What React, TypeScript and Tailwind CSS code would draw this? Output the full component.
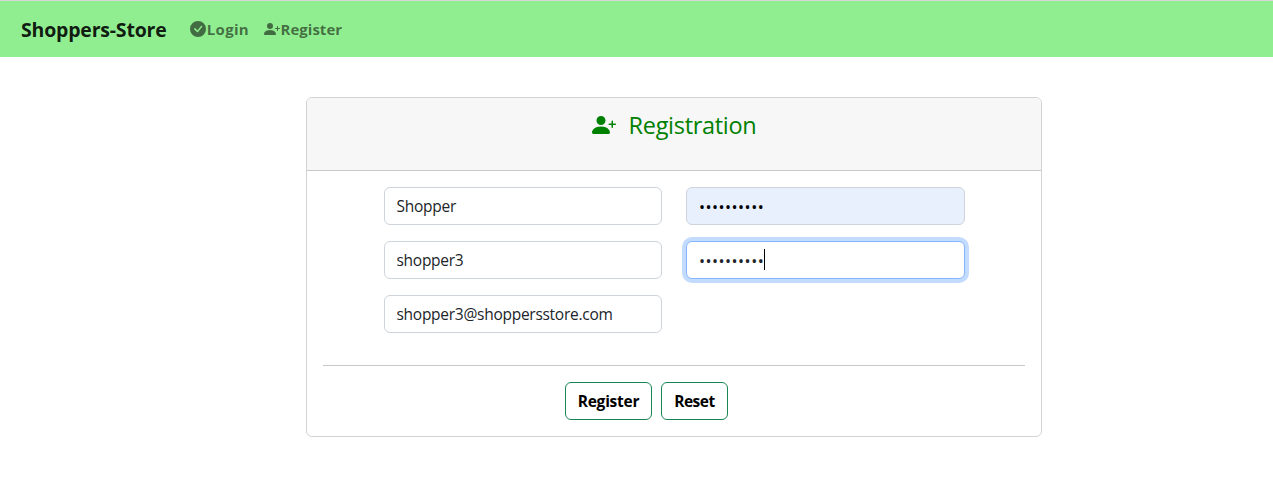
import React from "react";
import { BsCheckCircleFill, BsPersonPlusFill } from "react-icons/bs";

const field =
  "h-[38px] w-full rounded-md border border-[#ced4da] bg-white px-[11.5px] text-[15.5px] text-[#212529] outline-none tracking-[-0.27px]";

function TextField({ value }: { value: string }) {
  return <input type="text" defaultValue={value} className={field} />;
}

function MaskedField({ focused = false }: { focused?: boolean }) {
  const look = focused
    ? "border-[#86b7fe] bg-white text-[#212529] ring-4 ring-[#c2dbfe]"
    : "border-[#ced4da] bg-[#e8f0fe] text-black";
  return (
    <div className={`flex h-[38px] w-full items-center rounded-md border px-3 text-base ${look}`}>
      <span className="pt-px tracking-[0.5px]">••••••••••</span>
      {focused && <span className="-mt-px h-[21px] w-px bg-black" />}
    </div>
  );
}

export default function App() {
  return (
    <div className="min-h-[494px] bg-white font-['Open_Sans','Noto_Sans',sans-serif] text-[#212529]">
      <nav className="flex h-[57px] items-center border-t border-[#d5d7d9] bg-[#90ee90] pl-[21px]">
        <a className="w-[169.3px] whitespace-nowrap pt-[2px] text-[19.5px] font-bold tracking-[-0.2px] text-black/90">Shoppers-Store</a>
        <a className="flex w-[74px] items-center whitespace-nowrap text-base font-bold text-black/55">
          <BsCheckCircleFill className="size-4 shrink-0" />
          <span className="pl-[0.5px] text-[15px] tracking-[0.3px]">Login</span>
        </a>
        <a className="flex items-center whitespace-nowrap text-base font-bold text-black/55">
          <BsPersonPlusFill className="size-4 shrink-0" />
          <span className="pl-[0.3px] text-[15px]">Register</span>
        </a>
      </nav>

      <main className="ml-[306px] mt-10 h-[340px] w-[736px] rounded-md border border-[#d2d2d2]">
        <header className="flex h-[73px] justify-center rounded-t-[5px] border-b border-[#c8c8c8] bg-[#f7f7f7] pt-[9px] text-[#008000]">
          <h4 className="flex h-9 items-center gap-[13px] text-[23.5px] font-[370] tracking-[-0.3px]">
            <BsPersonPlusFill className="size-6" />
            <span className="pt-[2px]">Registration</span>
          </h4>
        </header>

        <form className="px-4 pt-4">
          <div className="ml-[61px] grid w-[581px] grid-cols-[278px_279px] gap-x-6 gap-y-4">
            <TextField value="Shopper" />
            <MaskedField />
            <TextField value="shopper3" />
            <MaskedField focused />
            <TextField value="shopper3@shoppersstore.com" />
          </div>
          <hr className="mt-8 border-t border-[#c8c8c8]" />
          <div className="ml-[242px] mt-4 flex gap-[9px]">
            <button type="button" className="h-[38px] w-[87px] rounded-md border border-[#198754] pt-px text-[15.5px] font-bold tracking-[-0.25px] text-black">
              <span>Register</span>
            </button>
            <button type="button" className="h-[38px] w-[67px] rounded-md border border-[#198754] pt-px text-[15.5px] font-bold tracking-[-0.45px] text-black">
              <span>Reset</span>
            </button>
          </div>
        </form>
      </main>
    </div>
  );
}
